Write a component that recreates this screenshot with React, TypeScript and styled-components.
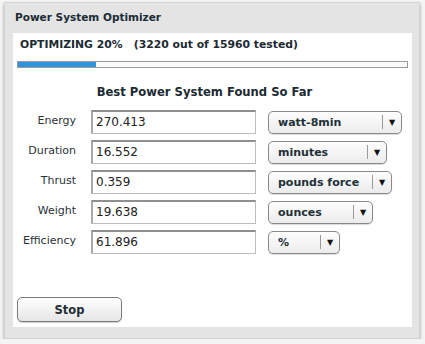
import React from "react";
import styled, { createGlobalStyle } from "styled-components";

const Global = createGlobalStyle`
  html, body { margin: 0; padding: 0; background: #f4f4f4; }
  body { font-family: "DejaVu Sans", Verdana, sans-serif; color: #1c2a33; }
`;

const Frame = styled.div`
  margin: 2px 5px 0 4px;
  width: 416px;
  height: 337px;
  box-sizing: border-box;
  background: #e4e4e4;
  border: 1px solid #d4d4d4;
  box-shadow: 0 2px 3px rgba(0,0,0,0.35);
  display: flex;
  flex-direction: column;
  padding: 0 7px 11px 8px;
`;

const Title = styled.div`
  font-weight: bold;
  font-size: 10.5px;
  height: 30px;
  line-height: 28px;
  padding-left: 2px;
  color: #1b2b36;
`;

const Panel = styled.div`
  flex: 1;
  background: #fff;
  display: flex;
  flex-direction: column;
  padding: 2px 4px 0 4px;
`;

const Status = styled.div`
  font-weight: bold;
  font-size: 10.8px;
  padding-left: 3px;
  height: 20px;
  line-height: 20px;
  white-space: pre;
`;

const Bar = styled.div`
  margin-top: 6px;
  height: 5px;
  border: 1px solid #9a9a9a;
  background: #fafafa;
  display: flex;
`;

const Fill = styled.div`
  background: #2f93de;
  height: 100%;
`;

const Heading = styled.div`
  font-weight: bold;
  font-size: 11.6px;
  text-align: center;
  margin-top: 15px;
  height: 18px;
  line-height: 18px;
  padding-right: 16px;
`;

const Rows = styled.div`
  display: flex;
  flex-direction: column;
  gap: 7px;
  margin-top: 9px;
`;

const Row = styled.div`
  display: grid;
  grid-template-columns: 62px 165px auto;
  column-gap: 12px;
  align-items: center;
  height: 23px;
`;

const Label = styled.div`
  font-size: 11px;
  text-align: right;
  padding-right: 3px;
  margin-top: -3px;
  color: #2a3238;
`;

const Input = styled.div`
  box-sizing: border-box;
  height: 24px;
  border: 1px solid #bdbdbd;
  border-top: 2px solid #8f8f8f;
  border-left: 2px solid #a9a9a9;
  font-size: 12px;
  line-height: 20px;
  padding-left: 3px;
  color: #222;
`;

const Select = styled.div<{ $w: number }>`
  box-sizing: border-box;
  width: ${(p) => p.$w}px;
  height: 23px;
  border: 1px solid #8a8a8a;
  border-radius: 5px;
  background: linear-gradient(#fdfdfd, #ececec);
  box-shadow: 0 1px 1px rgba(0,0,0,0.15);
  display: flex;
  align-items: center;
  font-weight: bold;
  font-size: 11px;
  color: #223038;
`;

const SelText = styled.div`
  flex: 1;
  padding-left: 9px;
`;

const Divider = styled.div`
  width: 1px;
  height: 14px;
  background: #9a9a9a;
`;

const Arrow = styled.div`
  width: 18px;
  text-align: center;
  font-size: 8px;
  color: #111;
`;

const Footer = styled.div`
  margin-top: auto;
  padding: 0 0 5px 0;
`;

const Button = styled.button`
  width: 105px;
  height: 25px;
  border: 1px solid #7a7a7a;
  border-radius: 5px;
  background: linear-gradient(#ffffff, #e6e6e6);
  box-shadow: 0 1px 1px rgba(0,0,0,0.2);
  font-family: "DejaVu Sans", Verdana, sans-serif;
  font-weight: bold;
  font-size: 11.5px;
  color: #1e2c35;
`;

const rows = [
  { label: "Energy", value: "270.413", unit: "watt-8min", w: 134 },
  { label: "Duration", value: "16.552", unit: "minutes", w: 119 },
  { label: "Thrust", value: "0.359", unit: "pounds force", w: 124 },
  { label: "Weight", value: "19.638", unit: "ounces", w: 105 },
  { label: "Efficiency", value: "61.896", unit: "%", w: 72 },
];

export default function App() {
  return (
    <>
      <Global />
      <Frame>
        <Title>Power System Optimizer</Title>
        <Panel>
          <Status>{"OPTIMIZING 20%   (3220 out of 15960 tested)"}</Status>
          <Bar>
            <Fill style={{ width: "20%" }} />
          </Bar>
          <Heading>Best Power System Found So Far</Heading>
          <Rows>
            {rows.map((r) => (
              <Row key={r.label}>
                <Label>{r.label}</Label>
                <Input>{r.value}</Input>
                <Select $w={r.w}>
                  <SelText>{r.unit}</SelText>
                  <Divider />
                  <Arrow>▼</Arrow>
                </Select>
              </Row>
            ))}
          </Rows>
          <Footer>
            <Button>Stop</Button>
          </Footer>
        </Panel>
      </Frame>
    </>
  );
}
